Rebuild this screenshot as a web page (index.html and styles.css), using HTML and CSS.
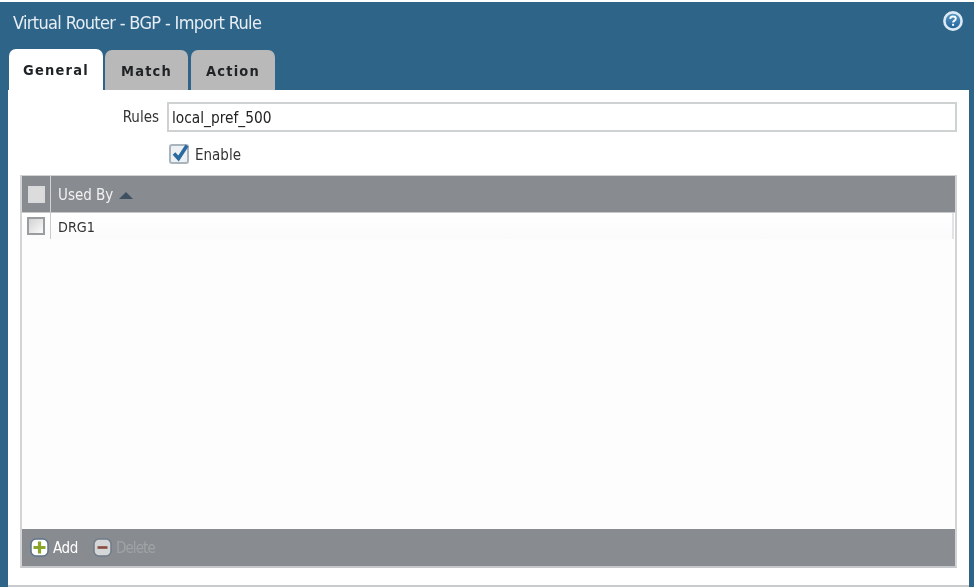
FILE: index.html
```html
<!DOCTYPE html>
<html lang="en">
<head>
<meta charset="utf-8">
<title>Virtual Router - BGP - Import Rule</title>
<link rel="stylesheet" href="styles.css">
</head>
<body>
<div class="window">
  <header class="titlebar">
    <h1 class="title">Virtual Router - BGP - Import Rule</h1>
    <svg class="help" width="22" height="22" viewBox="0 0 22 22" aria-hidden="true">
      <defs>
        <linearGradient id="helpFill" x1="0" y1="0" x2="0" y2="1">
          <stop offset="0" stop-color="#5d9dca"/>
          <stop offset="1" stop-color="#1c5f95"/>
        </linearGradient>
      </defs>
      <circle cx="11" cy="11" r="8.600" fill="url(#helpFill)" stroke="#dbeaf4" stroke-width="2.600"/>
      <path d="M8.200 8.800c.2-1.600 1.300-2.300 2.800-2.300 1.600 0 2.800.8 2.800 2.200 0 1.200-.8 1.700-1.600 2.200-.8.5-1.100.9-1.100 1.700" fill="none" stroke="#fff" stroke-width="1.900"/>
      <rect x="10.100" y="13.800" width="2" height="2" fill="#fff"/>
    </svg>
  </header>
  <nav class="tabs">
    <div class="tab tab-active">General</div>
    <div class="tab tab-match">Match</div>
    <div class="tab tab-action">Action</div>
  </nav>
  <main class="panel">
    <div class="form-row">
      <label class="field-label">Rules</label>
      <div class="input">local_pref_500</div>
    </div>
    <div class="enable-row">
      <span class="check">
        <svg width="22" height="22" viewBox="0 0 22 22" aria-hidden="true">
          <path d="M5 10.500l4.500 5L18 2.500" fill="none" stroke="#2a6a9e" stroke-width="3.600"/>
        </svg>
      </span>
      <span class="enable-label">Enable</span>
    </div>
    <section class="grid">
      <div class="grid-head">
        <div class="cell-check"><span class="box box-head"></span></div>
        <div class="cell-name">Used By <span class="sort"></span></div>
      </div>
      <div class="grid-row">
        <div class="cell-check"><span class="box"></span></div>
        <div class="cell-name cell-drg">DRG1</div>
      </div>
      <div class="grid-fill"></div>
      <div class="grid-foot">
        <span class="action">
          <svg class="action-icon" width="19" height="19" viewBox="0 0 19 19" aria-hidden="true">
            <rect x="1" y="1" width="17" height="17" rx="5" fill="#fff" stroke="#5f7488" stroke-width="1.500"/>
            <path d="M9.500 3.500v12M3.500 9.500h12" stroke="#8aa52a" stroke-width="3.200"/>
          </svg><span class="action-text">Add</span>
        </span>
        <span class="action action-off">
          <svg class="action-icon" width="19" height="19" viewBox="0 0 19 19" aria-hidden="true">
            <rect x="1" y="1" width="17" height="17" rx="5" fill="#d5d6d8" stroke="#6f7c8a" stroke-width="1.500"/>
            <path d="M4.500 9.500h10" stroke="#8a4a3c" stroke-width="2.600"/>
          </svg><span class="action-text action-text-off">Delete</span>
        </span>
      </div>
    </section>
  </main>
</div>
</body>
</html>
```
FILE: styles.css
```css
* { box-sizing: border-box; }
html, body { margin: 0; padding: 0; }
body { width: 974px; height: 587px; background: #fff; overflow: hidden; font-family: "DejaVu Sans Condensed", "Liberation Sans", sans-serif; }
.window { margin-top: 2px; height: 585px; padding: 0 5px 0 8px; background: #2f6489; display: flex; flex-direction: column; filter: blur(.35px); }
.titlebar { height: 47px; display: flex; justify-content: space-between; padding: 10px 0 0 5px; flex: none; }
.title { margin: 0; font: 400 18px/22px "DejaVu Sans Condensed", sans-serif; color: #e6eef4; letter-spacing: -.67px; }
.help { margin: -2px 5px 0 0; }
.tabs { display: flex; gap: 3px; height: 41px; flex: none; }
.tab { width: 83px; background: #b9b9b9; border-radius: 7px 7px 0 0; color: #1f2326; font: 700 14.500px/42px "DejaVu Sans Condensed", sans-serif; text-align: center; letter-spacing: 1.200px; margin-top: 1px; }
.tab-active { width: 94px; background: #fff; margin-top: 0; margin-left: 1px; margin-right: 0; }
.tab-match { margin-left: -1px; }
.tab-action { width: 84px; }
.panel { flex: 1; background: #fff; padding: 12px 12px 17px 12px; display: flex; flex-direction: column; border-bottom: 2px solid #c9cbcc; }
.form-row { display: flex; align-items: center; height: 30px; flex: none; }
.field-label { width: 147px; text-align: right; font-size: 15px; color: #333; padding-right: 8px; }
.input { flex: 1; height: 30px; border: 2px solid #cfd2d3; font-size: 15.300px; line-height: 28px; padding-left: 3px; color: #222; }
.enable-row { display: flex; align-items: center; height: 32px; padding-left: 149px; flex: none; margin-top: 6px; }
.check { width: 20px; height: 20px; border: 2px solid #a9b4bd; border-radius: 3px; background: #eef1f3; display: block; position: relative; }
.check svg { display: block; position: absolute; left: -2px; top: -3px; }
.enable-label { margin-left: 6px; font-size: 15px; color: #333; padding-top: 2px; }
.grid { flex: 1; margin-top: 5px; display: flex; flex-direction: column; border: 2px solid #d1d3d4; border-top-width: 1px; border-bottom: 2px solid #c5c7c8; }
.grid-head { height: 37px; background: #888b8f; display: flex; align-items: stretch; color: #f1f2f3; flex: none; border-bottom: 1px solid #c6c8c9; }
.grid-row { height: 26px; display: flex; align-items: stretch; color: #333; flex: none; background: linear-gradient(#fff, #fbfbfb); border-right: 2px solid #e2e3e4; margin-right: 1px; }
.cell-check { width: 29px; display: flex; justify-content: center; align-items: center; border-right: 1px solid #c9cbcc; flex: none; }
.grid-head .cell-check { border-right-color: #d0d2d3; }
.cell-name { display: flex; align-items: center; padding: 2px 0 0 7px; font-size: 15px; }
.cell-drg { font-size: 14.300px; }
.box { width: 18px; height: 18px; border: 2px solid #9a9da0; background: linear-gradient(135deg, #d2d2d2, #fafafa); display: block; }
.box-head { width: 17px; height: 17px; border-color: #d9dadb; background: #dcdcdc; }
.sort { width: 0; height: 0; border: 7px solid transparent; border-top: 0; border-bottom: 7px solid #3d5163; margin-left: 6px; }
.grid-fill { flex: 1; background: #fdfdfd; }
.grid-foot { height: 37px; background: #888b8f; display: flex; align-items: center; padding-left: 8px; gap: 15px; flex: none; color: #fff; font: 400 15px "DejaVu Sans Condensed", sans-serif; }
.action { display: flex; align-items: center; gap: 4px; }
.action-text { letter-spacing: -.4px; }
.action-text-off { letter-spacing: -.9px; }
.action-off { color: #a0a3a6; }
```
